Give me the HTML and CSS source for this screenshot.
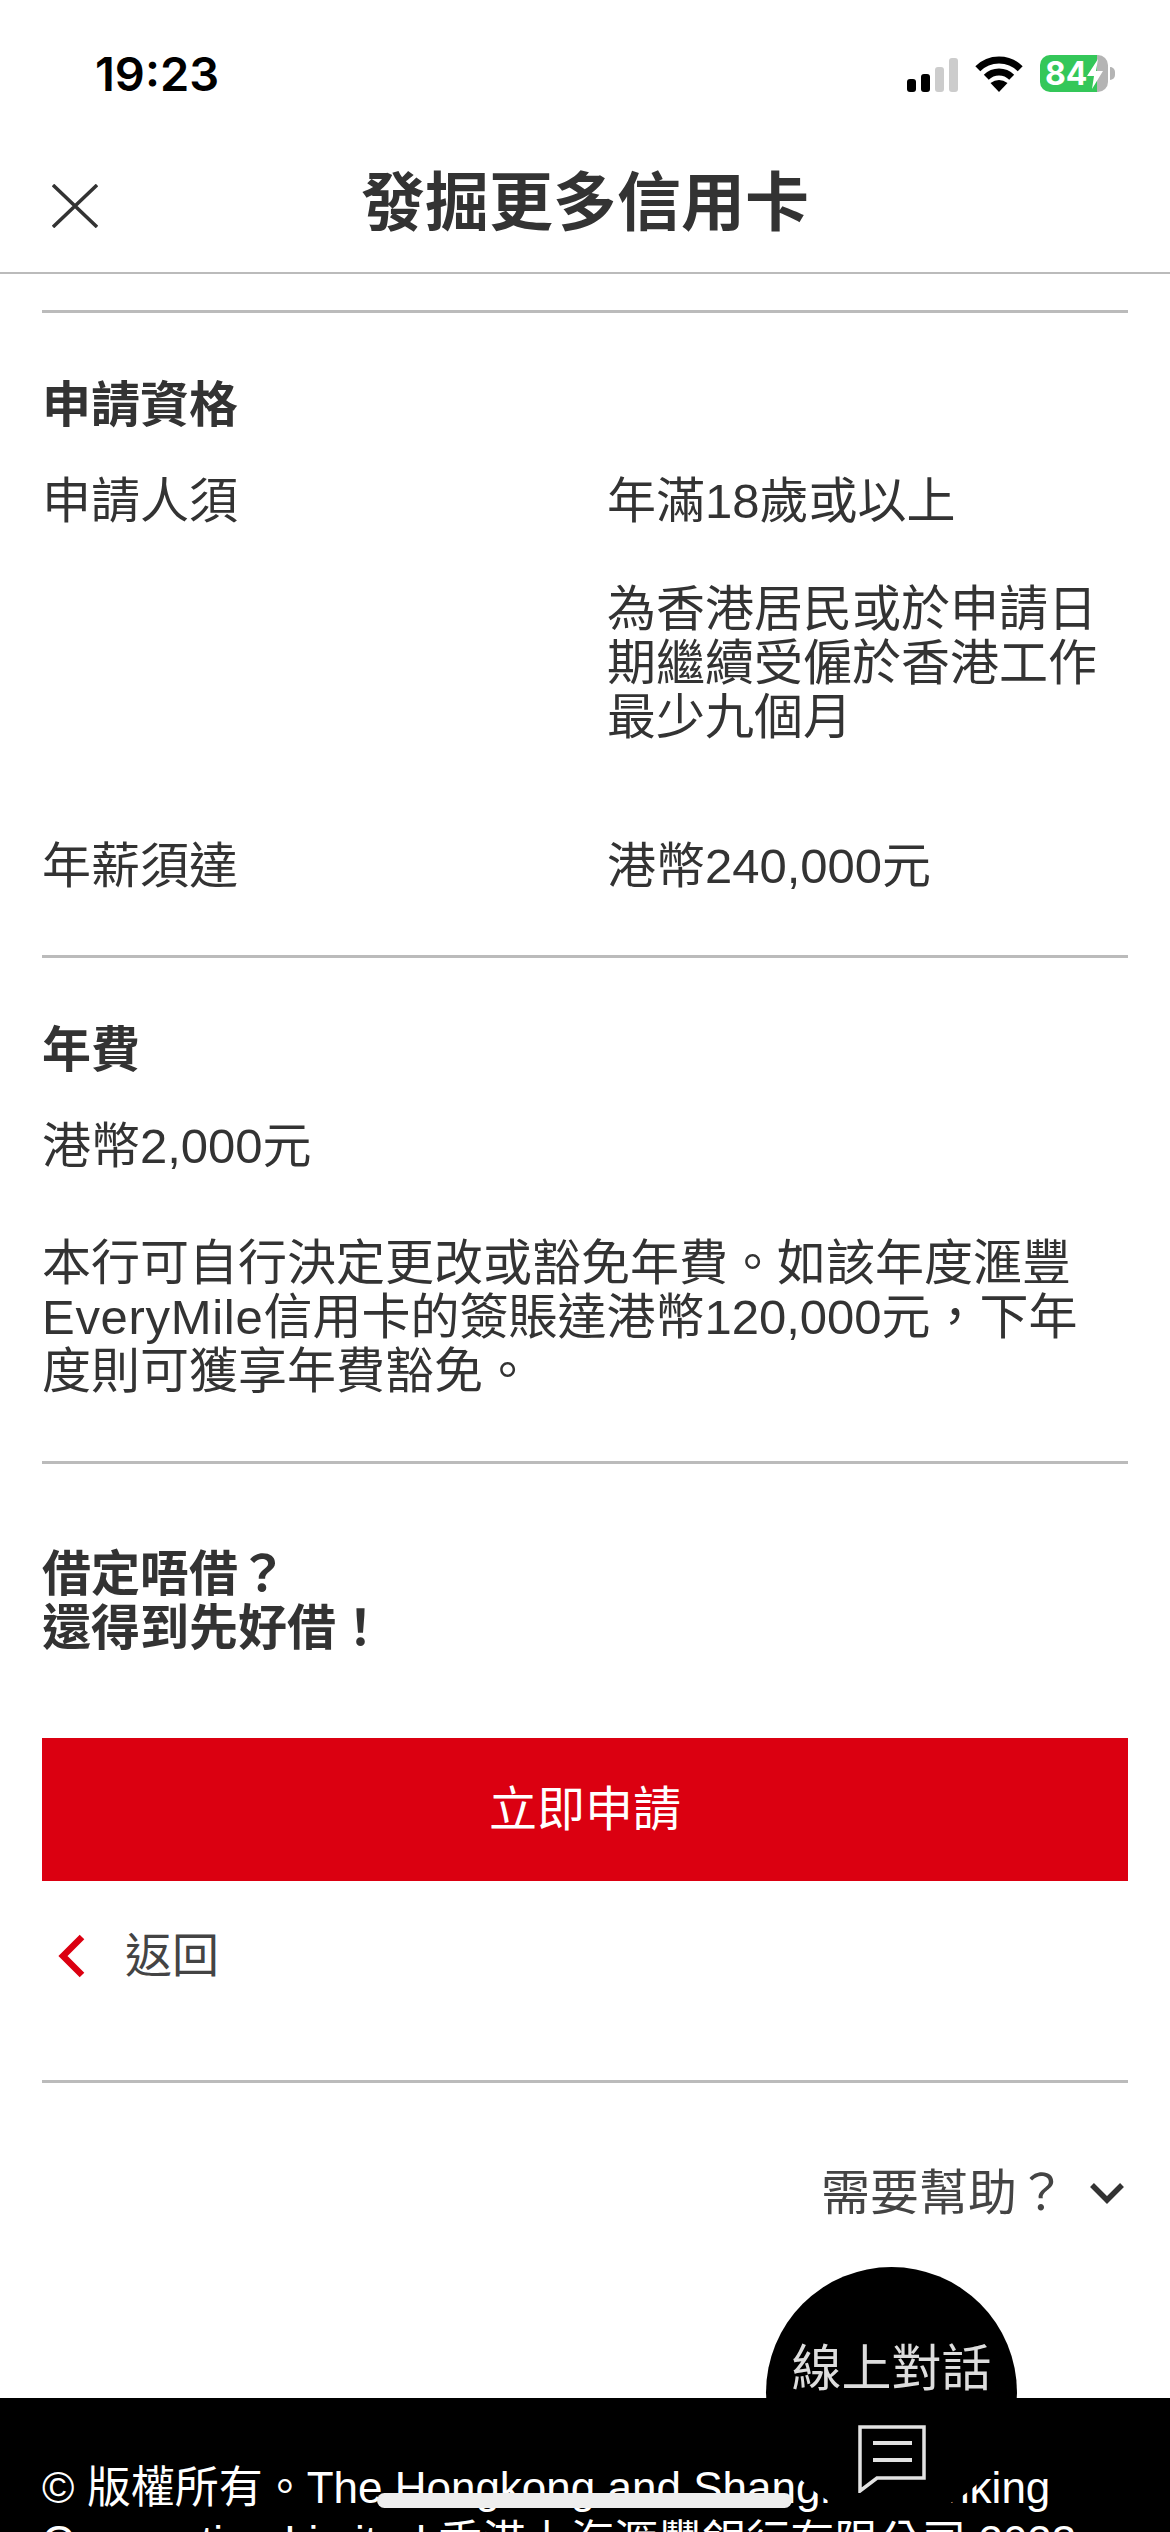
FILE: index.html
```html
<!DOCTYPE html>
<html lang="zh-Hant">
  <head>
    <meta charset="UTF-8" />
    <meta name="viewport" content="width=device-width, initial-scale=1.0" />
    <title>發掘更多信用卡</title>
    <link rel="stylesheet" href="styles.css">
  </head>
  <body>
    <div class="status-bar">
      <span class="time">19:23</span>
      <div class="status-icons">
        <div class="signal">
          <span class="bar bar-1"></span>
          <span class="bar bar-2"></span>
          <span class="bar bar-3"></span>
          <span class="bar bar-4"></span>
        </div>
        <svg class="wifi" width="48" height="36" viewBox="0 0 48 36">
          <path d="M2.8 12.8A30 30 0 0 1 45.2 12.8" fill="none" stroke="#000" stroke-width="7" />
          <path d="M11.3 21.3A18 18 0 0 1 36.7 21.3" fill="none" stroke="#000" stroke-width="7" />
          <path d="M24 36L15.5 27Q24 21 32.5 27Z" fill="#000" />
        </svg>
        <div class="battery">
          <span>84</span>
          <svg width="16" height="30" viewBox="0 0 16 30">
            <path d="M11 0L0 17H7L5 30L16 12H9Z" fill="#fff" />
          </svg>
        </div>
      </div>
    </div>

    <header class="top-bar">
      <svg class="close" width="46" height="44" viewBox="0 0 46 44">
        <path d="M1 1L45 43M45 1L1 43" fill="none" stroke="#333" stroke-width="3.5" />
      </svg>
      <h1>發掘更多信用卡</h1>
    </header>

    <main class="content">
      <section class="block block-eligibility">
        <h2>申請資格</h2>
        <div class="info-row">
          <div>申請人須</div>
          <div>
            <p>年滿18歲或以上</p>
            <p>為香港居民或於申請日期繼續受僱於香港工作最少九個月</p>
          </div>
        </div>
        <div class="info-row salary-row">
          <div>年薪須達</div>
          <div>港幣240,000元</div>
        </div>
      </section>

      <section class="block block-fee">
        <h2>年費</h2>
        <p>港幣2,000元</p>
        <p class="fee-note">本行可自行決定更改或豁免年費。如該年度滙豐<span class="brand">EveryMile</span>信用卡的簽賬達港幣120,000元，下年度則可獲享年費豁免。</p>
      </section>

      <section class="block block-apply">
        <h2>借定唔借？<br>還得到先好借！</h2>
        <a class="apply-btn" href="#">立即申請</a>
        <a class="back-link" href="#">
          <svg width="28" height="44" viewBox="0 0 28 44">
            <path d="M25 3L6 22L25 41" fill="none" stroke="#db0011" stroke-width="6.5" />
          </svg>
          <span>返回</span>
        </a>
      </section>

      <div class="help-row">
        <span>需要幫助？</span>
        <svg width="34" height="22" viewBox="0 0 34 22">
          <path d="M2 3L17 18L32 3" fill="none" stroke="#333" stroke-width="5.5" />
        </svg>
      </div>
    </main>

    <footer class="site-footer">
      © 版權所有。The Hongkong and Shanghai Banking Corporation Limited 香港上海滙豐銀行有限公司 2023
    </footer>

    <div class="chat-bubble">
      <span>線上對話</span>
      <svg width="68" height="68" viewBox="0 0 68 68">
        <path d="M2 2H66V53H19L2 66Z" fill="none" stroke="#e2e2e2" stroke-width="3.5" />
        <path d="M15 18H54M15 35H54" fill="none" stroke="#e2e2e2" stroke-width="4" />
      </svg>
    </div>

    <div class="home-indicator"></div>
  </body>
</html>
```

FILE: styles.css
```css
* {
  box-sizing: border-box;
}

html,
body {
  height: 100%;
}

body {
  margin: 0;
  position: relative;
  display: flex;
  flex-direction: column;
  height: 2532px;
  overflow: hidden;
  background: #fff;
  color: #333;
  font-family: "Liberation Sans", "Noto Sans CJK TC", sans-serif;
  font-size: 49px;
  line-height: 54px;
}

p {
  margin: 0;
}

/* status bar */
.status-bar {
  flex-shrink: 0;
  height: 134px;
  padding: 40px 62px 0 95px;
  display: flex;
  justify-content: space-between;
  align-items: flex-start;
  color: #000;
}

.time {
  font-family: "Inter", sans-serif;
  font-size: 47px;
  font-weight: 600;
  line-height: 68px;
}

.status-icons {
  display: flex;
  align-items: flex-end;
  height: 52px;
}

.signal {
  display: flex;
  align-items: flex-end;
  gap: 5px;
  margin-right: 17px;
}

.bar {
  width: 9px;
  border-radius: 3px;
  background: #000;
}

.bar-1 {
  height: 13px;
}

.bar-2 {
  height: 18px;
}

.bar-3 {
  height: 25px;
  background: #ccc;
}

.bar-4 {
  height: 34px;
  background: #ccc;
}

.wifi {
  margin-right: 17px;
}

.battery {
  position: relative;
  width: 68px;
  height: 37px;
  padding-left: 5px;
  display: flex;
  align-items: center;
  border-radius: 10px;
  background: linear-gradient(to right, #34c759 84%, #b4b4b4 84%);
  color: #fff;
  font-family: "Inter", sans-serif;
  font-size: 32px;
  font-weight: 700;
  line-height: 37px;
}

.battery::after {
  content: "";
  position: absolute;
  right: -7px;
  top: 12px;
  width: 5px;
  height: 13px;
  border-radius: 0 6px 6px 0;
  background: #b4b4b4;
}

/* title bar */
.top-bar {
  flex-shrink: 0;
  position: relative;
  height: 140px;
  display: flex;
  justify-content: center;
  align-items: center;
  border-bottom: 2px solid #bbb;
}

.top-bar h1 {
  margin: 0;
  font-size: 64px;
  font-weight: 700;
  line-height: 76px;
}

.close {
  position: absolute;
  left: 52px;
  top: 50px;
}

/* main column */
.content {
  flex-shrink: 0;
  padding: 36px 42px 0;
}

.block {
  border-top: 3px solid #bbb;
}

h2 {
  margin: 0;
  font-size: 49px;
  font-weight: 700;
  line-height: 54px;
}

.block-eligibility {
  padding: 65px 0 62px;
}

.info-row {
  display: grid;
  grid-template-columns: 565px 1fr;
  margin-top: 42px;
}

.info-row p + p {
  margin-top: 54px;
}

.salary-row {
  margin-top: 95px;
}

.block-fee {
  padding: 65px 0 63px;
}

.block-fee p {
  margin-top: 42px;
}

.block-fee .fee-note {
  max-width: 1060px;
  margin-top: 63px;
}

.brand {
  letter-spacing: 0.7px;
}

.block-apply {
  padding-top: 83px;
  padding-bottom: 97px;
  border-bottom: 3px solid #bbb;
}

.apply-btn {
  display: block;
  height: 143px;
  margin-top: 83px;
  background: #db0011;
  color: #fff;
  font-size: 48px;
  line-height: 143px;
  text-align: center;
  text-decoration: none;
}

.back-link {
  display: flex;
  align-items: center;
  gap: 40px;
  margin-top: 48px;
  padding-left: 15px;
  color: #444;
  font-size: 47px;
  text-decoration: none;
}

.help-row {
  display: flex;
  justify-content: flex-end;
  align-items: center;
  gap: 24px;
  margin-top: 83px;
  padding-right: 4px;
  color: #444;
}

/* footer */
.site-footer {
  flex: 1;
  min-height: 0;
  margin-top: 178px;
  padding: 63px 42px 0;
  background: #000;
  color: #fff;
  font-size: 44px;
}

.chat-bubble {
  position: absolute;
  left: 766px;
  top: 2267px;
  width: 251px;
  height: 251px;
  padding-top: 75px;
  display: flex;
  flex-direction: column;
  align-items: center;
  gap: 29px;
  border-radius: 50%;
  background: #000;
  color: #ddd;
  font-size: 50px;
}

.chat-bubble span,
.chat-bubble svg {
  filter: blur(0.6px);
}

.home-indicator {
  position: absolute;
  left: 377px;
  top: 2493px;
  width: 415px;
  height: 15px;
  border-radius: 8px;
  background: #eee;
}
```
